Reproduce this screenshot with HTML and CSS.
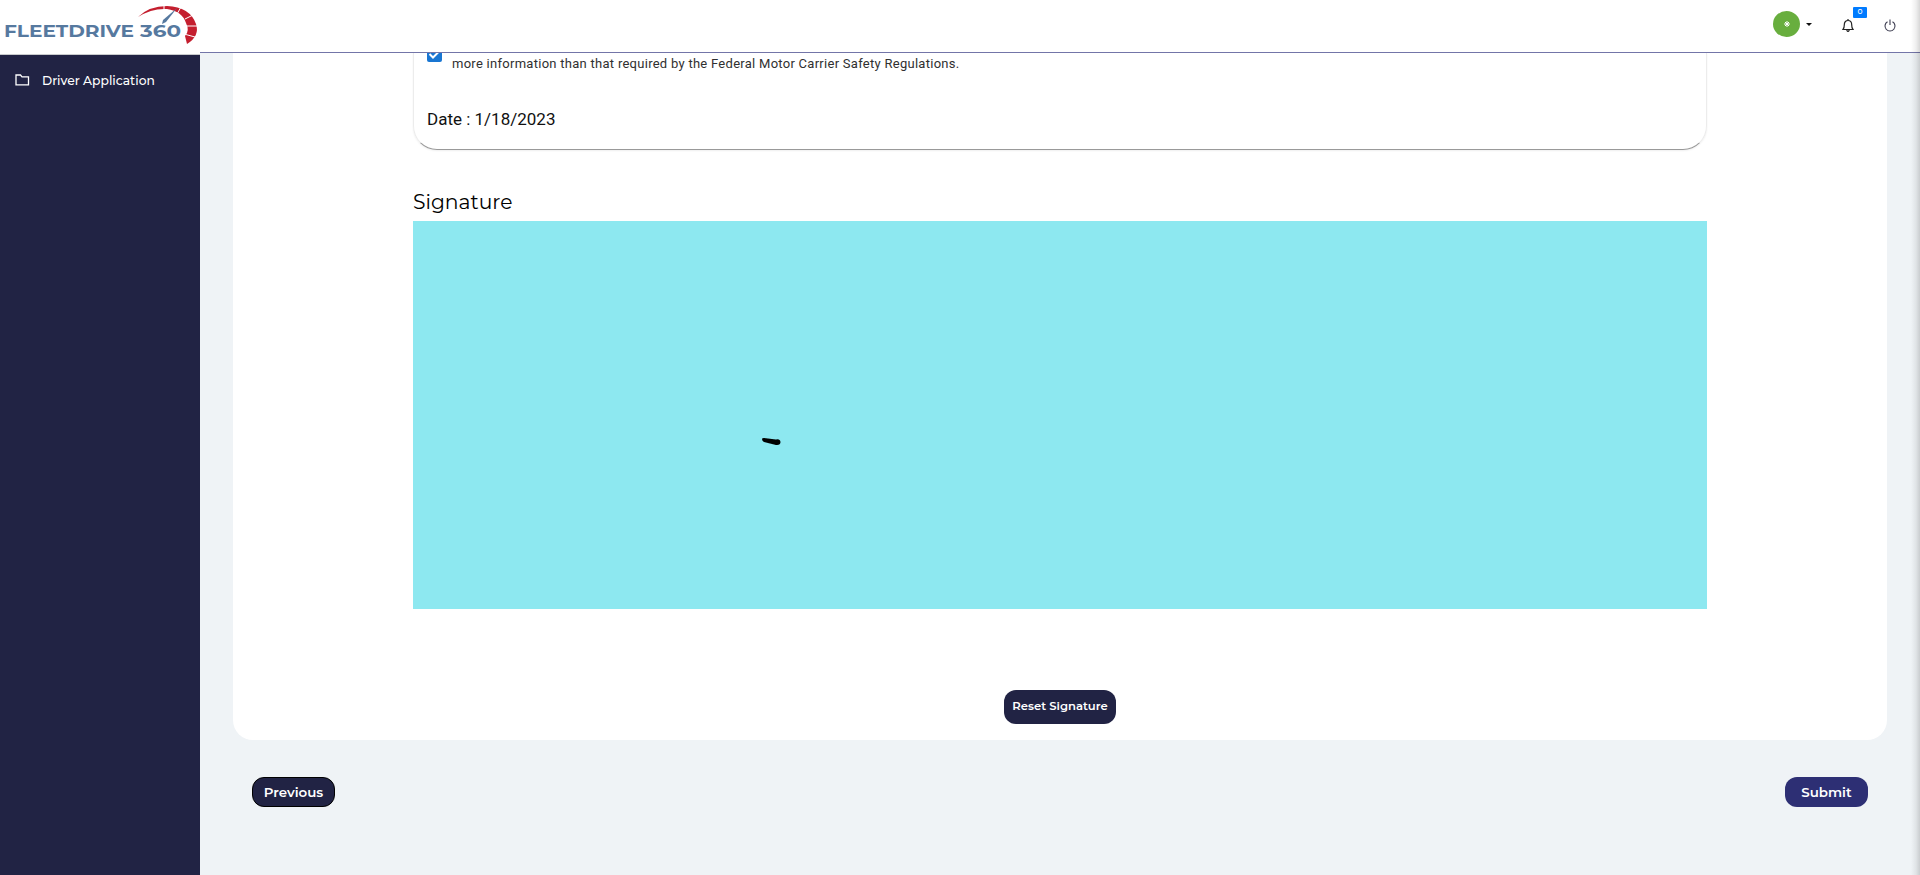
FILE: index.html
```html
<!DOCTYPE html>
<html lang="en">
<head>
<meta charset="utf-8">
<title>FleetDrive 360</title>
<link rel="stylesheet" href="styles.css">
</head>
<body>
<div class="app">
  <aside class="sidebar">
    <div class="brand">
      <svg width="200" height="54" viewBox="0 0 200 54" role="img" aria-label="FleetDrive 360">
        <text class="brand-text" x="4" y="37" textLength="130" lengthAdjust="spacingAndGlyphs">FLEETDRIVE</text>
        <text class="brand-text" x="140" y="37" textLength="41" lengthAdjust="spacingAndGlyphs">360</text>
        <path fill="#c41e2e" d="M138 17Q149 6 167 6Q190 7 196 24Q200 36 187 44L185 36Q190 31 186 23Q182 11 167 9Q152 8 138 17Z"/>
        <path stroke="#fff" stroke-width="1" d="M164 5V11M181 7L177 14M193 15L185 19M198 26H186M195 37L184 34"/>
        <path fill="#56799f" d="M177 8L166 22L162 24L163 20Z"/>
      </svg>
    </div>
    <nav class="menu">
      <a class="menu-item">
        <svg width="15" height="12" viewBox="0 0 15 12" fill="none" stroke="#fff" stroke-width="1.3"><path d="M1 1H5.5L7 2.8H13.5V10.8H1Z"/></svg>
        <span>Driver Application</span>
      </a>
    </nav>
  </aside>
  <div class="main">
    <header class="topbar">
      <div class="avatar"><svg width="8" height="8" viewBox="0 0 8 8" stroke="#fff" stroke-width="1"><path d="M4 1V7M1 4H7M2 2L6 6M6 2L2 6"/></svg></div>
      <span class="caret"></span>
      <div class="bell">
        <svg width="12" height="14" viewBox="0 0 12 14" fill="none" stroke="#222" stroke-width="1.2"><path d="M1 10.5C2.3 9 2.3 8 2.3 5.7C2.3 3 4 1.5 6 1.5S9.7 3 9.7 5.7C9.7 8 9.7 9 11 10.5ZM6 0V1.5M4.7 11Q6 14 7.3 11"/></svg>
        <span class="badge">0</span>
      </div>
      <svg class="power" width="12" height="13" viewBox="0 0 12 13" fill="none" stroke="#3c3c50" stroke-width="1.1"><path d="M3.5 2.7A5 5 0 1 0 8.5 2.7M6 0.5V6"/></svg>
    </header>
    <div class="content">
      <section class="card">
        <div class="terms">
          <label class="agree"><span class="check"><svg width="15" height="14" viewBox="0 0 15 14" fill="none" stroke="#fff" stroke-width="2"><path d="M2.5 6L6 9.5L12 3.5"/></svg></span><span class="agree-text">more information than that required by the Federal Motor Carrier Safety Regulations.</span></label>
          <p class="date"><span>Date : 1/18/2023</span></p>
        </div>
        <h2 class="heading"><span>Signature</span></h2>
        <div class="pad">
          <svg width="1294" height="388" viewBox="0 0 1294 388"><path d="M349 218Q349 217 351 217L363 218.5Q367 217.5 367.5 221Q367.5 224.5 363 224L351 221Q349 220 349 218Z"/></svg>
        </div>
        <button class="btn reset"><span>Reset Signature</span></button>
      </section>
      <div class="actions">
        <button class="btn previous"><span>Previous</span></button>
        <button class="btn submit"><span>Submit</span></button>
      </div>
    </div>
  </div>
  <div class="edge"></div>
</div>
</body>
</html>
```
FILE: styles.css
```css
* { box-sizing: border-box; }
body { margin: 0; font-family: Montserrat, "Open Sans", sans-serif; }
svg { display: block; flex: none; }
.app { display: flex; width: 1920px; height: 875px; overflow: hidden; position: relative; background: #eff3f6; }
.sidebar { width: 200px; background: #212344; flex: none; }
.brand { height: 55px; background: #fff; border-bottom: 1px solid #c9cbcd; }
.brand-text { font: 700 16px Montserrat, Inter, sans-serif; fill: #56799f; }
.menu { padding-top: 15px; }
.menu-item { display: flex; align-items: center; height: 20px; padding-left: 15px; gap: 12px; color: #fff; font: 500 12.3px Montserrat, Inter, sans-serif; }
.main { flex: 1; display: flex; flex-direction: column; }
.topbar { height: 53px; flex: none; background: #fff; border-bottom: 1px solid #7375a8; display: flex; align-items: flex-start; padding-left: 1573px; }
.avatar { width: 27px; height: 26px; margin-top: 11px; border-radius: 50%; background: #68ae3e; display: flex; align-items: center; justify-content: center; }
.caret { margin: 23px 0 0 6px; border: 3px solid transparent; border-top-color: #111; border-bottom: 0; }
.bell { position: relative; margin: 19px 0 0 30px; }
.badge { position: absolute; left: 11px; top: -12px; width: 14px; height: 11px; border-radius: 1px; background: #007bff; color: #fff; font: 500 7.5px/10px Montserrat, Inter, sans-serif; text-align: center; }
.power { margin: 19px 0 0 30px; }
.content { flex: 1; padding: 0 33px; }
.card { height: 687px; background: #fff; border-radius: 0 0 20px 20px; padding: 0 180px; display: flex; flex-direction: column; }
.terms { height: 97px; border-radius: 0 0 24px 24px; padding-left: 13px; border: 1px solid #ececec; border-top: 0; border-bottom-color: #999; box-shadow: 0 1px 2px #0001; }
.agree { display: flex; height: 20px; gap: 10px; }
.check { width: 15px; height: 14px; margin-top: -5px; background: #1976d2; border-radius: 2px; clip-path: inset(5px 0 0); }
.agree-text { font: 400 13px/22px Roboto, sans-serif; letter-spacing: .275px; color: #303030; white-space: nowrap; }
.date { margin: 36px 0 0; font: 400 17px/20px Roboto, sans-serif; color: #111; }
.heading { margin: 39px 0 0; height: 32px; font: 400 20.3px/26px Montserrat, Inter, sans-serif; color: #000; }
.pad { height: 388px; background: #8de8f0; }
.btn { border: 0; padding: 0; color: #fff; background: #212344; border-radius: 12px; font: 600 13.4px Montserrat, Inter, sans-serif; white-space: nowrap; }
.reset { width: 112px; height: 34px; margin-top: 81px; padding-bottom: 2px; align-self: center; font-size: 11.6px; }
.actions { display: flex; justify-content: space-between; padding: 37px 19px 0; }
.previous, .submit { width: 83px; height: 30px; padding-bottom: 1px; }
.previous { border: 1px solid #000; }
.submit { background: #2d2f74; }
.edge { position: absolute; top: 0; right: 0; width: 9px; height: 875px; background: linear-gradient(to right, #0000, #00000010 55%, #00000028); }
```
